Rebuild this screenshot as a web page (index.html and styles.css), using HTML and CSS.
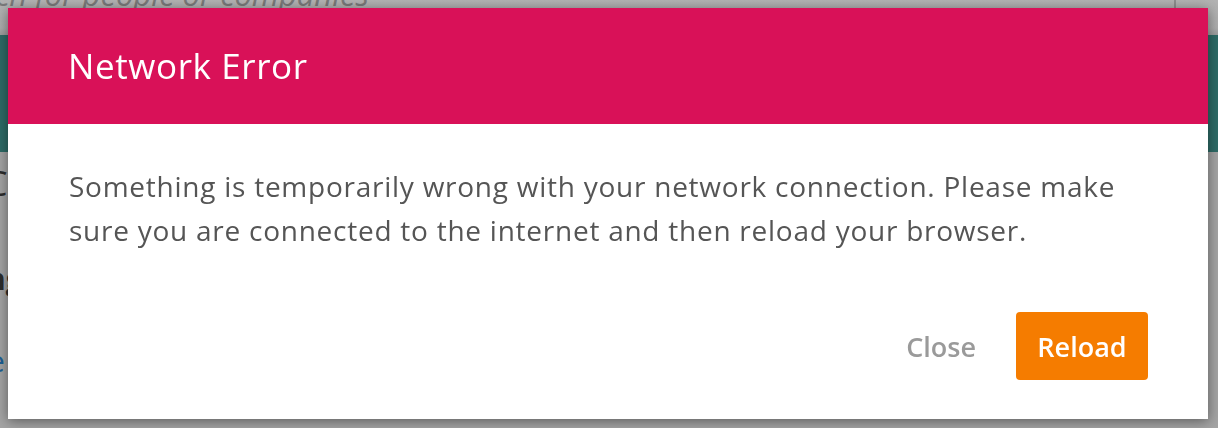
FILE: index.html
```html
<!DOCTYPE html>
<html>
<head>
<meta charset="utf-8">
<link rel="stylesheet" href="styles.css">
</head>
<body>
<div class="page">
  <div class="topbar">
    <div class="search">earch for people or companies</div>
    <div class="divider"></div>
  </div>
  <div class="teal"></div>
  <div class="content">
    <div class="line l1">C</div>
    <div class="line l2">ng</div>
    <div class="line l3">e</div>
  </div>
</div>
<div class="overlay">
  <div class="modal">
    <div class="modal-header">
      <h1 class="modal-title">Network Error</h1>
    </div>
    <div class="modal-body">
      <p class="modal-text">Something is temporarily wrong with your network connection. Please make sure you are connected to the internet and then reload your browser.</p>
      <div class="modal-actions">
        <button class="btn btn-close">Close</button>
        <button class="btn btn-reload">Reload</button>
      </div>
    </div>
  </div>
</div>
</body>
</html>
```
FILE: styles.css
```css
html, body {
  margin: 0;
  padding: 0;
  width: 1218px;
  height: 428px;
  overflow: hidden;
  background: #a4a4a4;
  font-family: "Open Sans", Lato, sans-serif;
}

.page {
  width: 1218px;
  height: 428px;
  overflow: hidden;
  background: #a4a4a4;
}

.topbar {
  height: 35px;
  background: linear-gradient(#b3b3b3, #adadad 80%, #9c9c9c);
  display: flex;
  justify-content: space-between;
  overflow: hidden;
}

.search {
  font-style: italic;
  font-size: 31px;
  line-height: 30px;
  color: #7a7a7a;
  margin-top: -21px;
  text-indent: -50px;
  white-space: nowrap;
}

.divider {
  width: 2px;
  height: 35px;
  background: #8e8e8e;
  margin-right: 42px;
}

.teal {
  height: 117px;
  background: #2e6b66;
}

.content {
  display: flex;
  flex-direction: column;
  font-size: 30px;
  margin-left: -14px;
}

.line {
  line-height: 30px;
  color: #2c2c2c;
}

.l1 { margin-top: 16px; font-size: 34px; }
.l2 { margin-top: 66px; font-weight: 700; }
.l3 { margin-top: 52px; color: #1d5f93; margin-left: 2px; }

.overlay {
  position: fixed;
  inset: 0;
  padding: 8px;
}

.modal {
  width: 1200px;
  height: 411px;
  background: #ffffff;
  box-shadow: 0 2px 12px rgba(0, 0, 0, 0.45);
  display: flex;
  flex-direction: column;
}

.modal-header {
  height: 116px;
  background: #d91158;
  display: flex;
  align-items: center;
  padding-left: 60px;
}

.modal-title {
  margin: 0;
  font-family: "Open Sans", sans-serif;
  font-weight: 400;
  font-size: 35px;
  letter-spacing: 0.6px;
  color: #ffffff;
  padding-bottom: 2px;
}

.modal-body {
  flex: 1;
  display: flex;
  flex-direction: column;
  padding: 40px 50px 39px 61px;
}

.modal-text {
  margin: 0;
  font-size: 28px;
  line-height: 44px;
  letter-spacing: 0.75px;
  color: #555555;
}

.modal-actions {
  margin-top: auto;
  margin-right: 10px;
  display: flex;
  justify-content: flex-end;
  align-items: center;
  gap: 40px;
}

.btn {
  font-family: "Open Sans", sans-serif;
  font-weight: 600;
  font-size: 27px;
  border: none;
  cursor: pointer;
}

.btn-close {
  background: transparent;
  color: #9a9a9a;
  padding: 0;
}

.btn-reload {
  background: #f57c00;
  color: #ffffff;
  width: 132px;
  height: 68px;
  border-radius: 4px;
  padding: 0;
}
```
